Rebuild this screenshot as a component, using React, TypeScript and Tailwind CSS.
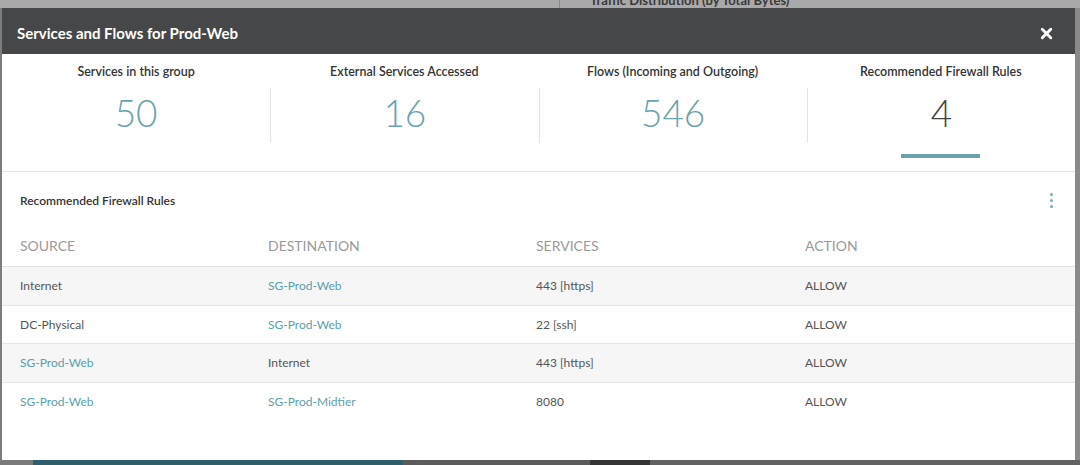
import React from "react";
import { X } from "lucide-react";

interface Rule {
  source: string;
  sourceLink: boolean;
  destination: string;
  destinationLink: boolean;
  services: string;
  action: string;
}

const stats = [
  { label: "Services in this group", value: "50", active: false },
  { label: "External Services Accessed", value: "16", active: false },
  { label: "Flows (Incoming and Outgoing)", value: "546", active: false },
  { label: "Recommended Firewall Rules", value: "4", active: true },
];

const rules: Rule[] = [
  { source: "Internet", sourceLink: false, destination: "SG-Prod-Web", destinationLink: true, services: "443 [https]", action: "ALLOW" },
  { source: "DC-Physical", sourceLink: false, destination: "SG-Prod-Web", destinationLink: true, services: "22 [ssh]", action: "ALLOW" },
  { source: "SG-Prod-Web", sourceLink: true, destination: "Internet", destinationLink: false, services: "443 [https]", action: "ALLOW" },
  { source: "SG-Prod-Web", sourceLink: true, destination: "SG-Prod-Midtier", destinationLink: true, services: "8080", action: "ALLOW" },
];

const Cell: React.FC<{ text: string; link?: boolean }> = ({ text, link }) => (
  <div className={`truncate ${link ? "text-[#5c9fad]" : "text-[#555]"}`}>{text}</div>
);

const App: React.FC = () => {
  return (
    <div
      className="w-[1080px] h-[465px] overflow-hidden bg-[#8c8c8c] flex flex-col"
      style={{ fontFamily: "Lato, 'Open Sans', sans-serif" }}
    >
      {/* Page behind the overlay */}
      <div className="h-[8px] shrink-0 bg-[#a9a9a9] flex overflow-hidden">
        <div className="w-[560px] border-r border-[#8a8a8a]" />
        <div className="pl-[30px] -mt-[8px] text-[13px] font-bold text-[#3a3a3a] leading-[16px]">
          Traffic Distribution (by Total Bytes) **
        </div>
      </div>

      <div className="flex flex-1 min-h-0">
        <div className="w-[2px] bg-[#7d7d7d]" />

        {/* Modal */}
        <div className="w-[1073px] h-[452px] bg-white flex flex-col">
          <div className="h-[46px] shrink-0 bg-[#464748] flex items-center justify-between pl-[15px] pr-[20px] pt-[4px]">
            <h2 className="text-[15px] font-bold text-white">Services and Flows for Prod-Web</h2>
            <X className="w-[17px] h-[17px] text-white" strokeWidth={4} />
          </div>

          {/* Stats */}
          <div className="h-[118px] shrink-0 grid grid-cols-4 border-b border-[#e6e6e6]">
            {stats.map((s, i) => (
              <div key={s.label} className="flex flex-col items-center pt-[10px]">
                <div className="text-[12.5px] font-semibold text-[#333] leading-[16px]">{s.label}</div>
                <div className={`mt-[8px] w-full flex justify-center h-[55px] ${i > 0 ? "border-l border-[#e3e3e3]" : ""}`}>
                  <span
                    className={`text-[37px] font-light leading-[46px] mt-[2px] ${
                      s.active ? "text-[#444]" : "text-[#6aa3ae]"
                    }`}
                  >
                    {s.value}
                  </span>
                </div>
                {s.active && <div className="mt-[11px] w-[79px] h-[4px] bg-[#6aa2ab]" />}
              </div>
            ))}
          </div>

          {/* Rules */}
          <div className="flex items-center justify-between pl-[18px] pr-[18px] h-[56px] pt-[1px]">
            <div className="text-[12px] font-semibold text-[#333]">Recommended Firewall Rules</div>
            <div className="flex flex-col gap-[3px] pr-[4px]">
              <span className="w-[3px] h-[3px] rounded-full bg-[#7aa9b3]" />
              <span className="w-[3px] h-[3px] rounded-full bg-[#7aa9b3]" />
              <span className="w-[3px] h-[3px] rounded-full bg-[#7aa9b3]" />
            </div>
          </div>

          <div className="grid grid-cols-[248px_268px_269px_1fr] pl-[18px] h-[39px] items-center pb-[3px] text-[14px] text-[#9a9a9a] border-b border-[#e0e0e0]">
            <div>SOURCE</div>
            <div>DESTINATION</div>
            <div>SERVICES</div>
            <div>ACTION</div>
          </div>

          {rules.map((r, i) => (
            <div
              key={i}
              className={`grid grid-cols-[248px_268px_269px_1fr] pl-[18px] h-[38.5px] items-center pt-[1px] text-[12px] ${
                i < rules.length - 1 ? "border-b border-[#e6e6e6]" : ""
              } ${i % 2 === 0 ? "bg-[#f6f6f6]" : "bg-white"}`}
            >
              <Cell text={r.source} link={r.sourceLink} />
              <Cell text={r.destination} link={r.destinationLink} />
              <Cell text={r.services} />
              <Cell text={r.action} />
            </div>
          ))}
        </div>

        <div className="flex-1 bg-[#8a8a8a]" />
      </div>

      {/* Page strip below the overlay */}
      <div className="h-[5px] shrink-0 flex">
        <div className="w-[33px] bg-[#7a7a7a]" />
        <div className="w-[370px] bg-[#2f5f6a]" />
        <div className="w-[187px] bg-[#5b5b5b]" />
        <div className="w-[60px] bg-[#353535]" />
        <div className="flex-1 bg-[#626262]" />
      </div>
    </div>
  );
};

export default App;
